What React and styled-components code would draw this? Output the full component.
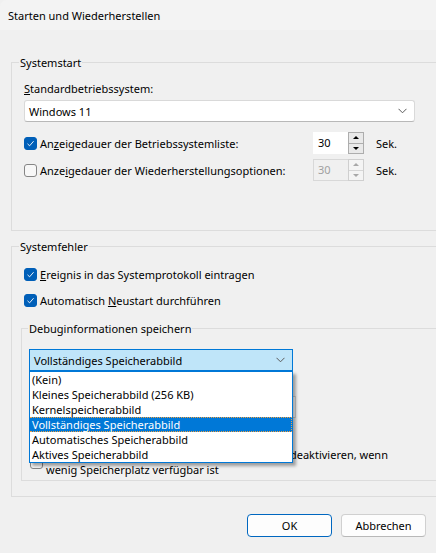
import { createGlobalStyle, styled } from "styled-components";

const GlobalStyle = createGlobalStyle`
  html, body {
    margin: 0;
    padding: 0;
    background: #f0f0f0;
  }
  body {
    font-family: "Segoe UI", "Noto Sans", "Liberation Sans", sans-serif;
    font-size: 11px;
    color: #000;
  }
  * {
    box-sizing: border-box;
  }
`;

const debugOptions = [
  "(Kein)",
  "Kleines Speicherabbild (256 KB)",
  "Kernelspeicherabbild",
  "Vollständiges Speicherabbild",
  "Automatisches Speicherabbild",
  "Aktives Speicherabbild",
];

function Chevron() {
  return (
    <svg width="9" height="6" viewBox="0 0 9 6">
      <path d="M0.5 0.8 L4.5 4.8 L8.5 0.8" fill="none" stroke="#5a5a5a" strokeWidth="1" />
    </svg>
  );
}

function CheckBox({ checked }) {
  return (
    <Box $checked={checked}>
      {checked && (
        <svg width="9" height="7" viewBox="0 0 9 7">
          <path d="M1.5 3.8 L3.6 5.8 L7.6 1.2" fill="none" stroke="#fff" strokeWidth="0.9" />
        </svg>
      )}
    </Box>
  );
}

function Spinner({ value, disabled }) {
  return (
    <Spin>
      <SpinText $disabled={disabled}>{value}</SpinText>
      <SpinButtons $disabled={disabled}>
        <SpinBtn $disabled={disabled}>
          <Arrow $up $disabled={disabled} />
        </SpinBtn>
        <SpinBtn $disabled={disabled} $bottom>
          <Arrow $disabled={disabled} />
        </SpinBtn>
      </SpinButtons>
    </Spin>
  );
}

export default function App() {
  return (
    <>
      <GlobalStyle />
      <Window>
        <TitleBar>Starten und Wiederherstellen</TitleBar>
        <Body>
          <Group>
            <Legend $offset={7}>Systemstart</Legend>
            <GroupInner $pad={12} $bottom={49}>
              <FieldLabel>
                <u>S</u>tandardbetriebssystem:
              </FieldLabel>
              <Select $width={391}>
                <span>Windows 11</span>
                <Chevron />
              </Select>
              <SpinRow $top={10}>
                <CheckLabel>
                  <CheckBox checked />
                  <span>
                    An<u>z</u>eigedauer der Betriebssystemliste:
                  </span>
                </CheckLabel>
                <Spinner value="30" />
                <Unit>Sek.</Unit>
              </SpinRow>
              <SpinRow $top={5}>
                <CheckLabel>
                  <CheckBox />
                  <span>
                    Anze<u>i</u>gedauer der Wiederherstellungsoptionen:
                  </span>
                </CheckLabel>
                <Spinner value="30" disabled />
                <Unit>Sek.</Unit>
              </SpinRow>
            </GroupInner>
          </Group>

          <Group $top={8}>
            <Legend $offset={7}>Systemfehler</Legend>
            <GroupInner $pad={9} $bottom={15}>
              <CheckRow $top={11} $indent={3}>
                <CheckBox checked />
                <span>
                  <u>E</u>reignis in das Systemprotokoll eintragen
                </span>
              </CheckRow>
              <CheckRow $top={8} $indent={3}>
                <CheckBox checked />
                <span>
                  Automatisch <u>N</u>eustart durchführen
                </span>
              </CheckRow>

              <SubGroup>
                <Legend $offset={6}>Debuginformationen speichern</Legend>
                <GroupInner $pad={7} $bottom={3}>
                  <DropWrap>
                    <Select $width={264} $active>
                      <span>Vollständiges Speicherabbild</span>
                      <Chevron />
                    </Select>
                    <DropList>
                      {debugOptions.map((opt, i) => (
                        <DropItem key={opt} $selected={i === 3}>
                          {opt}
                        </DropItem>
                      ))}
                    </DropList>
                  </DropWrap>
                  {/* covered by the open list: file label, path box, overwrite option */}
                  <Spacer $h={25} />
                  <TextBox />
                  <CheckRow $top={8} $indent={1}>
                    <CheckBox checked />
                  </CheckRow>
                  <CheckRow $top={3} $indent={1}>
                    <CheckBox />
                    <span>
                      Automatisches Löschen von Speicherabbildern deaktivieren, wenn
                      <br />
                      wenig Speicherplatz verfügbar ist
                    </span>
                  </CheckRow>
                </GroupInner>
              </SubGroup>
            </GroupInner>
          </Group>
        </Body>
        <Footer>
          <Button $default>OK</Button>
          <Button>Abbrechen</Button>
        </Footer>
      </Window>
    </>
  );
}

const Window = styled.div`
  width: 436px;
  height: 553px;
  overflow: hidden;
  background: #f0f0f0;
  border-top-left-radius: 7px;
  display: flex;
  flex-direction: column;
`;

const TitleBar = styled.div`
  height: 30px;
  flex-shrink: 0;
  display: flex;
  align-items: center;
  padding-left: 8px;
  background: #f3f3f3;
  font-size: 11px;
`;

const Body = styled.div`
  width: 470px;
  flex-shrink: 0;
  padding: 25px 0 0 11px;
`;

const Group = styled.fieldset`
  margin: ${(p) => p.$top || 0}px 0 0 0;
  padding: 0;
  min-width: 0;
  border: 1px solid #dcdcdc;
`;

const SubGroup = styled(Group)`
  align-self: stretch;
  margin: 12px 9px 0 0;
`;

const Legend = styled.legend`
  margin-left: ${(p) => p.$offset}px;
  padding: 0 1px;
  line-height: 15px;
  font-size: 11px;
`;

const GroupInner = styled.div`
  padding: 0 0 ${(p) => p.$bottom}px ${(p) => p.$pad}px;
  display: flex;
  flex-direction: column;
  align-items: flex-start;
`;

const FieldLabel = styled.div`
  margin-top: 11px;
  line-height: 15px;
`;

const Spacer = styled.div`
  height: ${(p) => p.$h}px;
`;

const Select = styled.div`
  width: ${(p) => p.$width}px;
  height: 22px;
  margin-top: ${(p) => (p.$active ? 13 : 4)}px;
  display: flex;
  align-items: center;
  justify-content: space-between;
  padding: 0 7px 0 4px;
  background: ${(p) => (p.$active ? "#bfe5f9" : "#fff")};
  border: 1px solid ${(p) => (p.$active ? "#0078d7" : "#d9d9d9")};
  border-bottom-color: ${(p) => (p.$active ? "#0078d7" : "#b8b8b8")};
  border-radius: ${(p) => (p.$active ? 0 : 3)}px;
`;

const DropWrap = styled.div`
  position: relative;
`;

const DropList = styled.div`
  position: absolute;
  top: 100%;
  left: 0;
  width: 264px;
  z-index: 5;
  background: #fff;
  border: 1px solid #0078d7;
  box-shadow: 3px 3px 3px rgba(0, 0, 0, 0.35);
`;

const DropItem = styled.div`
  height: 15px;
  line-height: 13px;
  padding-left: 2px;
  white-space: nowrap;
  background: ${(p) => (p.$selected ? "#0078d7" : "transparent")};
  color: ${(p) => (p.$selected ? "#fff" : "#000")};
  border: 1px ${(p) => (p.$selected ? "dotted #f0a040" : "solid transparent")};
  border-left: 0;
  border-right: ${(p) => (p.$selected ? "1px dotted #f0a040" : "0")};
`;

const TextBox = styled.div`
  width: 267px;
  height: 22px;
  background: #fff;
  border: 1px solid #d0d0d0;
`;

const SpinRow = styled.div`
  display: flex;
  align-items: center;
  height: 22px;
  margin-top: ${(p) => p.$top}px;
`;

const CheckLabel = styled.div`
  width: 289px;
  display: flex;
  align-items: center;
  gap: 3px;
`;

const CheckRow = styled.div`
  display: flex;
  align-items: center;
  gap: 3px;
  margin-top: ${(p) => p.$top}px;
  padding-left: ${(p) => p.$indent}px;
  line-height: 15px;
  min-height: 18px;
  white-space: nowrap;
`;

const Box = styled.span`
  width: 13px;
  height: 13px;
  flex-shrink: 0;
  border-radius: 3px;
  display: flex;
  align-items: center;
  justify-content: center;
  background: ${(p) => (p.$checked ? "#005fb8" : "#f7f7f7")};
  border: 1px solid ${(p) => (p.$checked ? "#005fb8" : "#858585")};
`;

const Spin = styled.div`
  display: flex;
  height: 22px;
`;

const SpinText = styled.div`
  width: 35px;
  height: 22px;
  padding-left: 4px;
  background: ${(p) => (p.$disabled ? "#f0f0f0" : "#fff")};
  color: ${(p) => (p.$disabled ? "#a0a0a0" : "#000")};
  border: 1px solid ${(p) => (p.$disabled ? "#d8d8d8" : "#fff")};
  border-right: 0;
  line-height: 20px;
`;

const SpinButtons = styled.div`
  width: 16px;
  height: 22px;
  display: flex;
  flex-direction: column;
  border: 1px solid ${(p) => (p.$disabled ? "#cfcfcf" : "#adadad")};
  background: ${(p) => (p.$disabled ? "#f4f4f4" : "#e9e9e9")};
`;

const SpinBtn = styled.div`
  flex: 1;
  display: flex;
  align-items: center;
  justify-content: center;
  border-top: ${(p) =>
    p.$bottom ? `1px solid ${p.$disabled ? "#d6d6d6" : "#adadad"}` : "0"};
`;

const Arrow = styled.span`
  width: 0;
  height: 0;
  border-left: 3px solid transparent;
  border-right: 3px solid transparent;
  ${(p) =>
    p.$up
      ? `border-bottom: 3px solid ${p.$disabled ? "#a8a8a8" : "#000"};`
      : `border-top: 3px solid ${p.$disabled ? "#a8a8a8" : "#000"};`}
`;

const Unit = styled.span`
  margin-left: 12px;
`;

const Footer = styled.div`
  display: flex;
  justify-content: flex-end;
  gap: 9px;
  padding-right: 10px;
  margin-top: 17px;
`;

const Button = styled.button`
  width: 85px;
  height: 23px;
  font: inherit;
  color: #000;
  background: #fdfdfd;
  border: 1px solid ${(p) => (p.$default ? "#0067c0" : "#d0d0d0")};
  border-bottom-color: ${(p) => (p.$default ? "#0067c0" : "#b8b8b8")};
  border-radius: 4px;
  padding: 0;
`;
